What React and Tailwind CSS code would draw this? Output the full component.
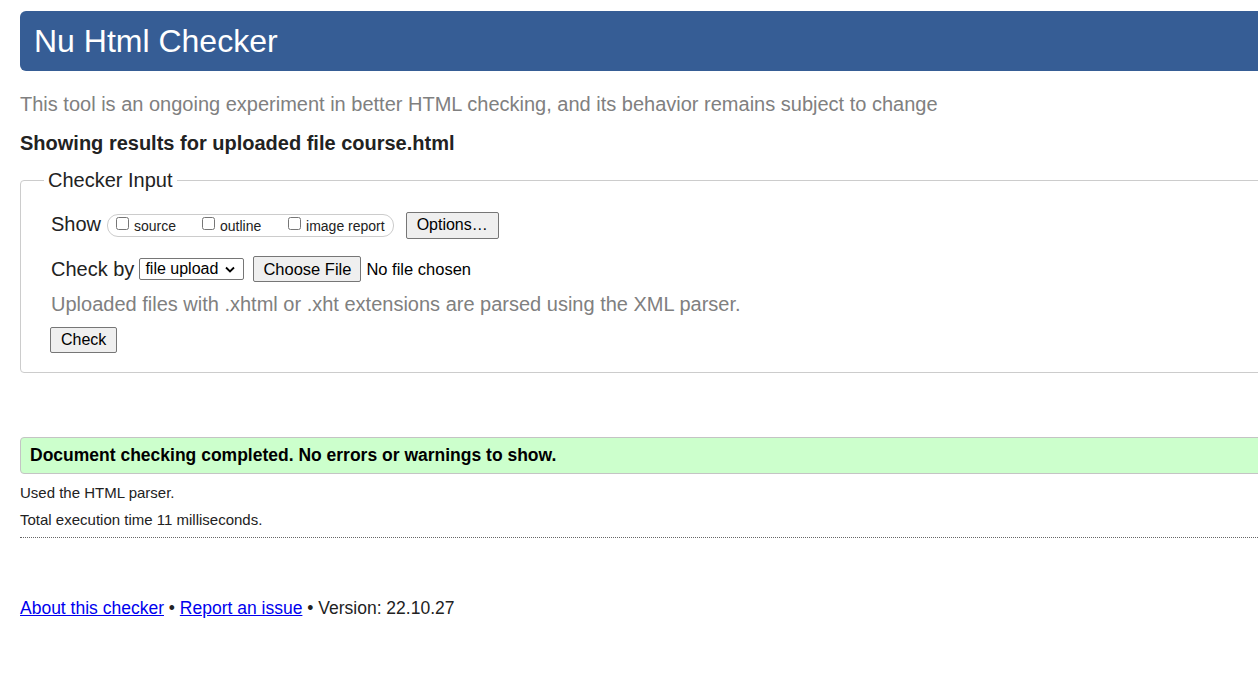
export default function App() {
  return (
    <div className="w-full min-h-[695px] overflow-hidden bg-white" style={{ fontFamily: '"Liberation Sans", Arial, sans-serif' }}>
      <div className="ml-[20px] w-[1300px] pt-[11px]">
        <header className="h-[60px] bg-[#365d95] rounded-l-[6px] flex items-center pl-[14px]">
          <h1 className="text-white text-[32px] leading-none">Nu Html Checker</h1>
        </header>
        <p className="mt-[22px] text-[20px] leading-[22px] text-[#808080]">
          This tool is an ongoing experiment in better HTML checking, and its behavior remains subject to change
        </p>
        <p className="mt-[17px] text-[20px] leading-[22px] font-bold text-[#222]">
          Showing results for uploaded file course.html
        </p>
        <fieldset className="mt-[15px] border border-[#cccccc] rounded-l-[4px] pl-[30px] pb-[19px] pt-[6px]">
          <legend className="-ml-[7px] px-[4px] text-[20px] leading-[22px] text-[#222]">Checker Input</legend>
          <div className="flex items-center h-[30px] mt-[12px]">
            <span className="text-[20px] text-[#222] mr-[6px]">Show</span>
            <div className="flex items-center h-[23px] border border-[#cccccc] rounded-[11px] pl-[8px] pr-[8px] mt-[2px]">
              <label className="flex items-center text-[14px] text-[#222] w-[86px] pt-[2px]">
                <input type="checkbox" className="w-[13px] h-[13px] mr-[5px] mb-[5px]" />source
              </label>
              <label className="flex items-center text-[14px] text-[#222] w-[86px] pt-[2px]">
                <input type="checkbox" className="w-[13px] h-[13px] mr-[5px] mb-[5px]" />outline
              </label>
              <label className="flex items-center text-[14px] text-[#222] pt-[2px]">
                <input type="checkbox" className="w-[13px] h-[13px] mr-[5px] mb-[5px]" />image report
              </label>
            </div>
            <button className="ml-[12px] mt-[2px] h-[27px] px-[10px] text-[16px] text-black bg-[#efefef] border border-[#767676] rounded-[2px]">Options…</button>
          </div>
          <div className="flex items-center h-[30px] mt-[15px]">
            <span className="text-[20px] text-[#222] mr-[5px]">Check by</span>
            <div className="flex items-center h-[22px] w-[105px] border border-[#767676] rounded-[2px] pl-[5px] text-[16px] text-black">
              <span>file upload</span>
              <svg className="ml-[7px]" width="10" height="7" viewBox="0 0 10 7"><path d="M1 1.5 L5 5.5 L9 1.5" fill="none" stroke="#000" strokeWidth="1.8" /></svg>
            </div>
            <button className="ml-[9px] h-[26px] px-[9px] text-[16.5px] text-black bg-[#efefef] border border-[#767676] rounded-[2px]">Choose File</button>
            <span className="ml-[5px] text-[16.5px] text-black">No file chosen</span>
          </div>
          <p className="mt-[9px] text-[20px] leading-[22px] text-[#808080]">
            Uploaded files with .xhtml or .xht extensions are parsed using the XML parser.
          </p>
          <button className="mt-[12px] -ml-[1px] h-[26px] px-[10px] text-[16px] text-black bg-[#efefef] border border-[#767676] rounded-[2px]">Check</button>
        </fieldset>
        <div className="mt-[64px] h-[37px] flex items-center bg-[#ccffcc] border border-[#c4c4c4] rounded-l-[4px] pl-[9px]">
          <span className="text-[17.5px] font-bold text-black">Document checking completed. No errors or warnings to show.</span>
        </div>
        <p className="mt-[10px] text-[15px] leading-[18px] text-[#222]">Used the HTML parser.</p>
        <p className="mt-[9px] text-[15px] leading-[18px] text-[#222]">Total execution time 11 milliseconds.</p>
        <div className="mt-[8px] border-t border-dotted border-[#666]"></div>
        <p className="mt-[60px] text-[17.5px] leading-[20px] text-[#222]">
          <a href="#" className="text-[#0000ee] underline">About this checker</a> • <a href="#" className="text-[#0000ee] underline">Report an issue</a> • Version: 22.10.27
        </p>
      </div>
    </div>
  );
}
